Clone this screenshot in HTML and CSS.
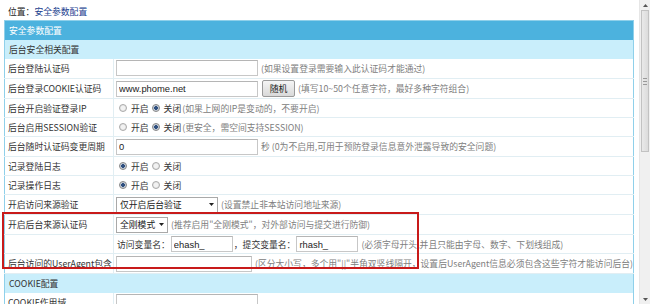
FILE: index.html
```html
<!DOCTYPE html>
<html lang="zh-CN">
<head>
    <meta charset="UTF-8">
    <title>安全参数配置</title>
    <link rel="stylesheet" href="styles.css">
</head>
<body>
    <div class="page">
        <div class="main">
            <div class="position">位置：<a href="#">安全参数配置</a></div>
            <div class="panel">
                <table class="form">
                    <colgroup><col class="c-label"><col></colgroup>
                    <tr class="head"><td colspan="2">安全参数配置</td></tr>
                    <tr class="group"><td colspan="2">后台安全相关配置</td></tr>
                    <tr class="tall">
                        <th>后台登陆认证码</th>
                        <td><div class="cell"><input class="text w-long" type="text"><span class="hint">(如果设置登录需要输入此认证码才能通过)</span></div></td>
                    </tr>
                    <tr class="tall">
                        <th>后台登录COOKIE认证码</th>
                        <td><div class="cell"><input class="text w-long" type="text" value="www.phome.net"><button class="btn" type="button">随机</button><span class="hint">(填写10~50个任意字符，最好多种字符组合)</span></div></td>
                    </tr>
                    <tr>
                        <th>后台开启验证登录IP</th>
                        <td><div class="cell">
                            <input class="radio" type="radio" name="ip"><span class="opt">开启</span>
                            <input class="radio" type="radio" name="ip" checked><span class="opt">关闭</span>
                            <span class="hint tight">(如果上网的IP是变动的，不要开启)</span>
                        </div></td>
                    </tr>
                    <tr>
                        <th>后台启用SESSION验证</th>
                        <td><div class="cell">
                            <input class="radio" type="radio" name="session"><span class="opt">开启</span>
                            <input class="radio" type="radio" name="session" checked><span class="opt">关闭</span>
                            <span class="hint tight">(更安全，需空间支持SESSION)</span>
                        </div></td>
                    </tr>
                    <tr class="tall">
                        <th>后台随时认证码变更周期</th>
                        <td><div class="cell"><input class="text w-long" type="text" value="0"><span class="hint">秒 (0为不启用,可用于预防登录信息意外泄露导致的安全问题)</span></div></td>
                    </tr>
                    <tr>
                        <th>记录登陆日志</th>
                        <td><div class="cell">
                            <input class="radio" type="radio" name="loginlog" checked><span class="opt">开启</span>
                            <input class="radio" type="radio" name="loginlog"><span class="opt">关闭</span>
                        </div></td>
                    </tr>
                    <tr>
                        <th>记录操作日志</th>
                        <td><div class="cell">
                            <input class="radio" type="radio" name="dolog" checked><span class="opt">开启</span>
                            <input class="radio" type="radio" name="dolog"><span class="opt">关闭</span>
                        </div></td>
                    </tr>
                    <tr class="tall">
                        <th>开启访问来源验证</th>
                        <td><div class="cell">
                            <div class="select w-select">仅开启后台验证<svg width="5" height="3" viewBox="0 0 5 3"><path d="M0 0 H5 L2.5 3 Z" fill="#222"/></svg></div>
                            <span class="hint">(设置禁止非本站访问地址来源)</span>
                        </div></td>
                    </tr>
                    <tr class="tall">
                        <th>开启后台来源认证码</th>
                        <td><div class="cell">
                            <div class="select w-mode">全刚模式<svg width="5" height="3" viewBox="0 0 5 3"><path d="M0 0 H5 L2.5 3 Z" fill="#222"/></svg></div>
                            <span class="hint">(推荐启用"全刚模式"，对外部访问与提交进行防御)</span>
                        </div></td>
                    </tr>
                    <tr>
                        <th></th>
                        <td><div class="cell">
                            <span class="opt first">访问变量名：</span><input class="text w-short" type="text" value="ehash_">
                            <span class="opt">，提交变量名：</span><input class="text w-short" type="text" value="rhash_">
                            <span class="hint">(必须字母开头,并且只能由字母、数字、下划线组成)</span>
                        </div></td>
                    </tr>
                    <tr class="tall">
                        <th>后台访问的UserAgent包含</th>
                        <td><div class="cell"><input class="text w-long" type="text"><span class="hint">(区分大小写，多个用"||"半角双竖线隔开，设置后UserAgent信息必须包含这些字符才能访问后台)</span></div></td>
                    </tr>
                    <tr class="group"><td colspan="2">COOKIE配置</td></tr>
                    <tr class="tall">
                        <th>COOKIE作用域</th>
                        <td><div class="cell"><input class="text w-long" type="text"></div></td>
                    </tr>
                </table>
                <div class="mark"></div>
            </div>
        </div>
        <div class="scrollbar">
            <div class="arrow"><svg width="5" height="3" viewBox="0 0 5 3"><path d="M0 3 H5 L2.5 0 Z" fill="#555"/></svg></div>
            <div class="track">
                <div class="thumb"><span class="grip"></span></div>
            </div>
            <div class="arrow"><svg width="5" height="3" viewBox="0 0 5 3"><path d="M0 0 H5 L2.5 3 Z" fill="#555"/></svg></div>
        </div>
    </div>
</body>
</html>
```

FILE: styles.css
```css
html, body {
    height: 100%;
    margin: 0;
    background: #fff;
}
body {
    font-family: "Noto Sans CJK SC", "Liberation Sans", sans-serif;
    font-size: 8.8px;
    color: #333;
    overflow: hidden;
}

.page {
    display: flex;
    height: 100%;
}
.main {
    flex: 1;
    min-width: 0;
    padding: 0 5px 0 4px;
}

.position {
    height: 20px;
    line-height: 20px;
    padding: 2px 0 0 4px;
    box-sizing: border-box;
    color: #222;
}
.position a {
    color: #1b3f8f;
    text-decoration: none;
}

.panel {
    position: relative;
}

.form {
    width: 100%;
    table-layout: fixed;
    border-collapse: collapse;
    border: 1px solid #8fd0ea;
}
.form col.c-label {
    width: 109px;
}
.form tr {
    height: 19px;
}
.form tr.tall {
    height: 20px;
}
.form th,
.form td {
    padding: 0;
    border-bottom: 1px solid #e1eef3;
    text-align: left;
    font-weight: normal;
    vertical-align: middle;
    overflow: hidden;
}
.form th {
    padding-left: 3px;
    border-right: 1px solid #e1eef3;
    color: #333;
    white-space: nowrap;
}
.form tr.head td {
    background: #4cb2de;
    color: #fff;
    padding-left: 4px;
    border-bottom: 0;
}
.form tr.group td {
    background: #c9eefb;
    color: #333;
    padding-left: 4px;
    border-bottom: 0;
}

.cell {
    display: flex;
    align-items: center;
    padding-left: 2px;
    white-space: nowrap;
}

.text {
    box-sizing: border-box;
    height: 16px;
    margin: 0;
    padding: 0 2px;
    border: 1px solid #c7c7c7;
    border-top-color: #b5b5b5;
    font-family: "Liberation Sans", "Noto Sans CJK SC", sans-serif;
    font-size: 9.4px;
    color: #222;
    background: #fff;
}
.w-long { width: 142px; }
.w-short { width: 62px; }

.hint {
    color: #808080;
    margin-left: 3px;
}
.hint.tight {
    margin-left: 1px;
}

.btn {
    box-sizing: border-box;
    width: 33px;
    height: 17px;
    margin: 0 0 0 4px;
    padding: 0;
    border: 1px solid #9a9a9a;
    border-radius: 2px;
    background: linear-gradient(#f5f5f5, #d9d9d9);
    font: inherit;
    color: #222;
}

.radio {
    appearance: none;
    box-sizing: border-box;
    width: 8px;
    height: 8px;
    margin: 0 4px 0 3px;
    border: 1px solid #ababab;
    border-radius: 50%;
    background: radial-gradient(circle, #f2f2f2 40%, #d8d8d8 100%);
}
.radio:checked {
    border-color: #8a8a8a;
    background: radial-gradient(circle, #2f4f7f 0 38%, #b9c4d2 48%, #e8e8e8 100%);
}
.opt + .radio {
    margin-left: 3px;
}
.opt {
    color: #333;
}
.opt.first {
    margin-left: 1px;
}
.opt + .text {
    margin-left: 1px;
}
.text + .opt {
    margin-left: 1px;
}

.select {
    box-sizing: border-box;
    display: flex;
    align-items: center;
    justify-content: space-between;
    height: 16px;
    padding: 0 3px 0 3px;
    border: 1px solid #a9a9a9;
    background: #fff;
    color: #222;
}
.w-select { width: 102px; }
.w-mode { width: 52px; }

/* annotation frame over the source-check rows */
.mark {
    position: absolute;
    left: -2px;
    top: 192px;
    width: 417px;
    height: 57px;
    box-sizing: border-box;
    border: 2px solid #c81a1a;
    pointer-events: none;
}

.scrollbar {
    width: 10px;
    display: flex;
    flex-direction: column;
    background: #f0f0f0;
    border-left: 1px solid #e6e6e6;
}
.arrow {
    height: 10px;
    display: flex;
    align-items: center;
    justify-content: center;
}
.track {
    flex: 1;
}
.thumb {
    height: 142px;
    margin: 0 1px;
    box-sizing: border-box;
    border: 1px solid #c2c2c2;
    background: linear-gradient(90deg, #e9e9e9, #dcdcdc);
    display: flex;
    align-items: center;
    justify-content: center;
}
.grip {
    width: 4px;
    height: 5px;
    border-top: 1px solid #999;
    border-bottom: 1px solid #999;
    background: linear-gradient(#999, #999) center / 100% 1px no-repeat;
}
```
